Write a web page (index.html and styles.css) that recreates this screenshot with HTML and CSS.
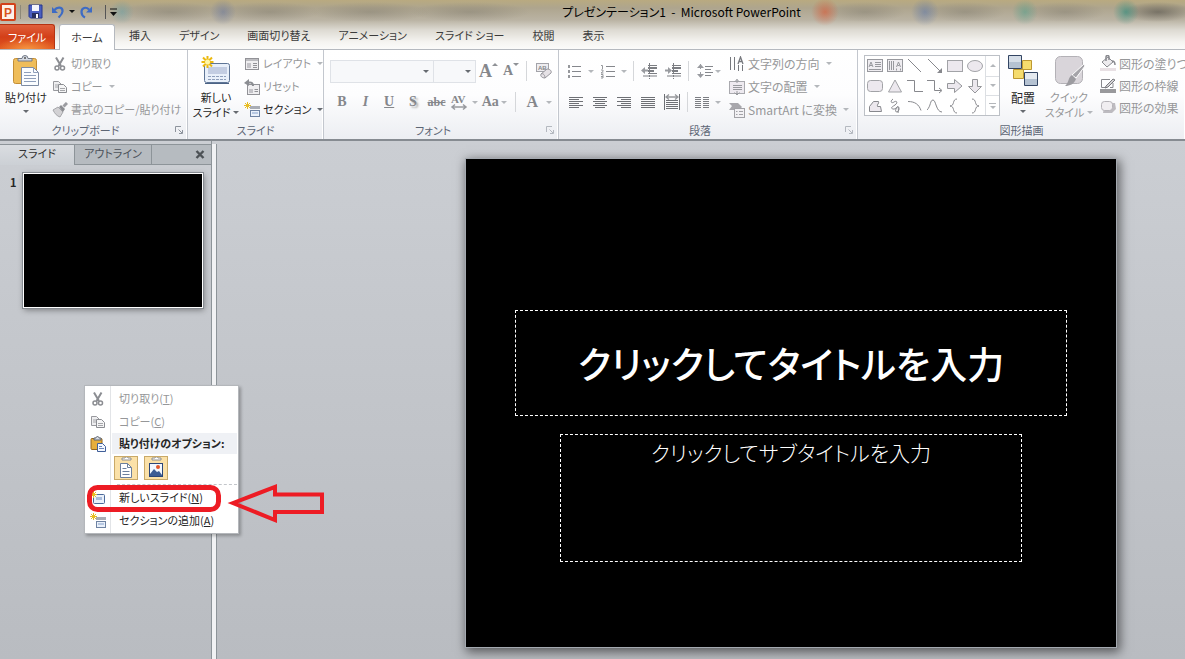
FILE: index.html
```html
<!DOCTYPE html>
<html lang="ja">
<head>
<meta charset="utf-8">
<title>プレゼンテーション1 - Microsoft PowerPoint</title>
<link rel="stylesheet" href="styles.css">
</head>
<body>
<header class="chrome">
  <div class="titlebar">
    <div class="quick">
      <svg class="app" width="16" height="18" viewBox="0 0 16 18"><rect x="1" y="1" width="14" height="16" rx="1" fill="#fdf1e8" stroke="#d2421a" stroke-width="2"/><text x="4" y="14" class="logo-text">P</text></svg>
      <span class="qsep"></span>
      <button class="qbtn" aria-label="上書き保存"><svg width="15" height="15" viewBox="0 0 15 15"><path d="M1 1h13v13H2.500L1 12.500z" fill="#4a5fc0" stroke="#27368d"/><path d="M4 1h7v6H4z" fill="#f4f6fd"/><path d="M4 9h7v5H4z" fill="#26305f"/><path d="M8 10h2v4H8z" fill="#fff"/></svg></button>
      <button class="qbtn" aria-label="元に戻す"><svg width="14" height="14" viewBox="0 0 14 14"><path d="M3.500 5C6 1.500 12 1.500 11.500 6.500 11.200 9.500 9 11 7.500 12.500" fill="none" stroke="#3d6bc4" stroke-width="2.200"/><path d="M1 2v6h6z" fill="#3d6bc4"/></svg></button>
      <span class="caret dark"></span>
      <button class="qbtn" aria-label="やり直し"><svg width="14" height="14" viewBox="0 0 14 14"><path d="M10 4.500C7 1.500 2.500 2.500 2.500 7c0 2.500 1.500 4.500 3.500 5.500" fill="none" stroke="#3d6bc4" stroke-width="2.200"/><path d="M13 1.500v6H7z" fill="#3d6bc4"/></svg></button>
      <span class="qsep dark"></span>
      <button class="qbtn" aria-label="カスタマイズ"><svg width="7" height="8" viewBox="0 0 7 8"><path d="M0 4h7L3.500 8z" fill="#111"/><path d="M0 1h7" stroke="#111"/></svg></button>
    </div>
    <h1 class="doc-title">プレゼンテーション1&nbsp; -&nbsp; Microsoft PowerPoint</h1>
  </div>
  <nav class="tabs">
    <button class="tab file">ファイル</button>
    <button class="tab active">ホーム</button>
    <button class="tab">挿入</button>
    <button class="tab">デザイン</button>
    <button class="tab">画面切り替え</button>
    <button class="tab">アニメーション</button>
    <button class="tab">スライド ショー</button>
    <button class="tab">校閲</button>
    <button class="tab">表示</button>
  </nav>
</header>

<section class="ribbon">
  <section class="group clipboard">
    <div class="group-body">
      <button class="big paste">
        <svg width="28" height="32" viewBox="0 0 28 32"><rect x="1.500" y="3.500" width="23" height="25" rx="2" fill="#efbd5a" stroke="#c48e35"/><path d="M6 6V3.500h4a3 3 0 0 1 6 0h4V6z" fill="#d5dae2" stroke="#727987"/><circle cx="13" cy="3" r="1" fill="#555"/><path d="M9.500 12.500h12l5 5v13h-17z" fill="#fbfdff" stroke="#7d8ba3"/><path d="M21.500 12.500v5h5M12 17.500h7M12 20.500h12M12 23.500h12M12 26.500h12" fill="none" stroke="#8f9fbb"/></svg>
        <span>貼り付け</span><span class="caret"></span>
      </button>
      <div class="stack kana">
        <button class="small off"><svg width="16" height="16" viewBox="0 0 16 16"><path d="M4 1.500l5 8.500M11.500 1.500L6.500 10" fill="none" stroke="#8b8d92" stroke-width="2"/><circle cx="5" cy="12" r="2" fill="none" stroke="#8b8d92" stroke-width="1.500"/><circle cx="10.500" cy="12" r="2" fill="none" stroke="#8b8d92" stroke-width="1.500"/></svg>切り取り</button>
        <button class="small off"><svg width="16" height="16" viewBox="0 0 16 16"><path d="M1.500 2.500h5l3 3v6h-8z" fill="#eeeef0" stroke="#98999e"/><path d="M6.500 5.500h5l3 3v5h-8z" fill="#f5f5f6" stroke="#8b8d92"/><path d="M3 6h3M3 8h3M8 9.500h5M8 11.500h5" stroke="#a5a6aa"/></svg>コピー<span class="caret"></span></button>
        <button class="small off"><svg width="16" height="16" viewBox="0 0 16 16"><path d="M1 8l5-3 5 5-3 5c-3-1-5-3-7-7z" fill="#d2d1d4" stroke="#a5a6aa"/><path d="M7 5l2-2 4 4-2 3z" fill="#8b8d92"/><path d="M11.500 4.500L15 1" stroke="#9b9ca1" stroke-width="3"/></svg>書式のコピー/貼り付け</button>
      </div>
    </div>
    <div class="group-name"><span>クリップボード</span><button class="launch" aria-label="クリップボードの詳細"><svg width="8" height="8" viewBox="0 0 8 8"><path d="M.500 6V.500H6M3.500 3.500L7 7M7.500 4v3.500H4" fill="none" stroke="#8d939c"/></svg></button></div>
  </section>

  <section class="group slides">
    <div class="group-body">
      <button class="big two">
        <svg width="32" height="32" viewBox="0 0 32 32"><rect x="4.500" y="8.500" width="25" height="19" rx="2" fill="#e9f0fa" stroke="#5e7596"/><path d="M8 12h19v7H8z" fill="#c3cde2"/><path d="M8 21.500h18M8 24.500h18" stroke="#8f9fbb" stroke-dasharray="3 1"/><path d="M5 28.500h24" stroke="#4b6284"/><path d="M7.500 1v12M1.500 7h12M3 2.500l9 9M12 2.500l-9 9" stroke="#ecb90f" stroke-width="2"/><circle cx="7.500" cy="7" r="2.500" fill="#fff7a8"/></svg>
        <span>新しい</span><span class="line">スライド<span class="caret"></span></span>
      </button>
      <div class="stack kana">
        <button class="small off"><svg width="16" height="16" viewBox="0 0 16 16"><rect x="1.500" y="2.500" width="13" height="11" fill="#f0eff1" stroke="#929297"/><path d="M2 3h12v2H2z" fill="#bcbcc0"/><path d="M3 7h4v5H3z" fill="#c4c3c8"/><path d="M9 7.500h4M9 9.500h4M9 11.500h4" stroke="#929297"/></svg>レイアウト<span class="caret"></span></button>
        <button class="small off"><svg width="16" height="16" viewBox="0 0 16 16"><rect x="3.500" y="5.500" width="12" height="10" fill="#f0eff1" stroke="#929297"/><path d="M5 10h4v4H5z" fill="#c4c3c8"/><path d="M10.500 10.500H14M10.500 12.500H14" stroke="#929297"/><path d="M3 4c3-1 6-1 6 3" fill="none" stroke="#8b8d92" stroke-width="2"/><path d="M5 0v7L0 4z" fill="#8b8d92"/></svg>リセット</button>
        <button class="small"><svg width="16" height="16" viewBox="0 0 16 16"><path d="M6 4h10v3H6z" fill="#a9adb5"/><rect x="6.500" y="8.500" width="9" height="6" fill="#eaf1fb" stroke="#6e83a3"/><path d="M8 10h6v2H8z" fill="#b7c8e2"/><path d="M3.500 0v7M0 3.500h7M1 1l5 5M6 1L1 6" stroke="#e8bd22"/></svg>セクション<span class="caret"></span></button>
      </div>
    </div>
    <div class="group-name"><span>スライド</span></div>
  </section>

  <section class="group font">
    <div class="group-body rows">
      <div class="row">
        <label class="combo wide"><select aria-label="フォント"><option></option></select><span class="caret mid"></span></label>
        <label class="combo"><select aria-label="フォント サイズ"><option></option></select><span class="caret mid"></span></label>
        <button class="tool serif grow">A<span class="mark up"></span></button>
        <button class="tool serif shrink">A<span class="mark down"></span></button>
        <span class="div"></span>
        <button class="tool" aria-label="書式のクリア"><svg width="18" height="18" viewBox="0 0 18 18"><rect x="1.500" y="1.500" width="12" height="8" fill="#eeedf0" stroke="#a3a3a9"/><text x="3" y="8" class="tiny">AB</text><path d="M6 12l6-5c3 0 5 2 4 4l-6 5c-3 0-5-2-4-4z" fill="#e6e2e6" stroke="#98979d"/><path d="M6 12c1-1 4 0 4 4" fill="none" stroke="#98979d"/></svg></button>
      </div>
      <div class="row">
        <button class="tool serif"><b>B</b></button>
        <button class="tool serif"><i>I</i></button>
        <button class="tool serif"><u>U</u></button>
        <button class="tool serif shade">S</button>
        <button class="tool serif strike"><s>abc</s></button>
        <button class="tool serif av" aria-label="文字の間隔"><svg width="20" height="18" viewBox="0 0 20 18"><text x="1" y="10" class="av-text">AV</text><path d="M2 14h14M5 11.500L2 14l3 2.500M13 11.500l3 2.500-3 2.500" fill="none" stroke="#989a9f" stroke-width="1.500"/></svg><span class="caret pale"></span></button>
        <button class="tool serif case">Aa<span class="caret pale"></span></button>
        <span class="div"></span>
        <button class="tool serif color">A<span class="caret pale"></span></button>
      </div>
    </div>
    <div class="group-name"><span>フォント</span><button class="launch pale" aria-label="フォントの詳細"><svg width="8" height="8" viewBox="0 0 8 8"><path d="M.500 6V.500H6M3.500 3.500L7 7M7.500 4v3.500H4" fill="none" stroke="#8d939c"/></svg></button></div>
  </section>

  <section class="group para">
    <div class="group-body">
      <div class="rows">
        <div class="row">
          <button class="tool drop" aria-label="箇条書き"><svg width="15" height="15" viewBox="0 0 15 15"><path d="M5 2.500h9M5 7.500h9M5 12.500h9" stroke="#85878c"/><path d="M1 1h2v3H1zM1 6h2v3H1zM1 11h2v3H1z" fill="#96989c"/></svg><span class="caret pale"></span></button>
          <button class="tool drop" aria-label="段落番号"><svg width="15" height="15" viewBox="0 0 15 15"><path d="M6 2.500h9M6 7.500h9M6 12.500h9" stroke="#85878c"/><path d="M1 1.500h1.500V5M1 6h2v1.500L1 9h2.500M1 10.500h2v3.500H1M1 12.500h2" fill="none" stroke="#96989c"/></svg><span class="caret pale"></span></button>
          <span class="div"></span>
          <button class="tool" aria-label="インデントを減らす"><svg width="16" height="16" viewBox="0 0 16 16"><path d="M7 2.500h9M7 10.500h9M2 13h14" stroke="#7c7e83"/><path d="M7 5h9M7 8h6" stroke="#7c7e83" stroke-width="2"/><path d="M8.500 0v16" stroke="#7c7e83" stroke-dasharray="2 1"/><path d="M0 7.500L4 4v2.500h3v2H4V11z" fill="#999ba0"/></svg></button>
          <button class="tool" aria-label="インデントを増やす"><svg width="16" height="16" viewBox="0 0 16 16"><path d="M7 2.500h9M7 10.500h9M2 13h14" stroke="#7c7e83"/><path d="M7 5h9M7 8h6" stroke="#7c7e83" stroke-width="2"/><path d="M8.500 0v16" stroke="#7c7e83" stroke-dasharray="2 1"/><path d="M7 7.500L3 4v2.500H0v2h3V11z" fill="#999ba0"/></svg></button>
          <span class="div"></span>
          <button class="tool drop tight" aria-label="行間"><svg width="16" height="16" viewBox="0 0 16 16"><path d="M3.500 1v14" stroke="#999ba0" stroke-dasharray="5 3"/><path d="M0 5l3.500-4L7 5zM0 11l3.500 4L7 11z" fill="#999ba0"/><path d="M8 3.500h8M8 6.500h6M8 9.500h8M8 12.500h6" stroke="#85878c"/></svg><span class="caret pale"></span></button>
        </div>
        <div class="row">
          <button class="tool" aria-label="左揃え"><svg width="14" height="13" viewBox="0 0 14 13"><path d="M0 1.500h14M0 3.500h10M0 5.500h14M0 7.500h10M0 9.500h14M0 11.500h10" stroke="#6e7075"/></svg></button>
          <button class="tool" aria-label="中央揃え"><svg width="14" height="13" viewBox="0 0 14 13"><path d="M0 1.500h14M2 3.500h10M0 5.500h14M2 7.500h10M0 9.500h14M2 11.500h10" stroke="#6e7075"/></svg></button>
          <button class="tool" aria-label="右揃え"><svg width="14" height="13" viewBox="0 0 14 13"><path d="M0 1.500h14M4 3.500h10M0 5.500h14M4 7.500h10M0 9.500h14M4 11.500h10" stroke="#6e7075"/></svg></button>
          <button class="tool" aria-label="両端揃え"><svg width="14" height="13" viewBox="0 0 14 13"><path d="M0 1.500h14M0 3.500h14M0 5.500h14M0 7.500h14M0 9.500h14M0 11.500h14" stroke="#6e7075"/></svg></button>
          <button class="tool" aria-label="均等割り付け"><svg width="16" height="16" viewBox="0 0 16 16"><path d="M.500 0v16M15.500 0v16M2 6.500h12M2 8.500h12M2 10.500h12M2 12.500h12M2 14.500h12" stroke="#6e7075"/><path d="M2 3h12M5 .500L2 3l3 2.500M11 .500L14 3l-3 2.500" fill="none" stroke="#96989c" stroke-width="1.300"/></svg></button>
          <span class="div"></span>
          <button class="tool drop" aria-label="段組み"><svg width="14" height="13" viewBox="0 0 14 13"><path d="M0 1.500h6M8 1.500h6M0 3.500h6M8 3.500h6M0 5.500h6M8 5.500h6M0 7.500h6M8 7.500h6M0 9.500h6M8 9.500h6M0 11.500h6M8 11.500h6" stroke="#7c7e83"/></svg><span class="caret pale"></span></button>
        </div>
      </div>
      <div class="stack">
        <button class="small off"><svg width="16" height="16" viewBox="0 0 16 16"><path d="M1.500 1v13M5.500 1v13M9.500 9v6M13.500 9v6" stroke="#77797e"/><path d="M9 8l2.500-7L14 8M10 5.500h3" fill="none" stroke="#77797e" stroke-width="1.300"/></svg>文字列の方向<span class="caret"></span></button>
        <button class="small off"><svg width="16" height="16" viewBox="0 0 16 16"><rect x=".500" y="2.500" width="15" height="12" fill="#eeeaf0" stroke="#a9a9ae"/><path d="M8 0v4M8 12v4M5.500 3L8 .500 10.500 3M5.500 13.500L8 16l2.500-2.500M4 6.500h9M4 8.500h9M4 10.500h9" fill="none" stroke="#98999e"/></svg>文字の配置<span class="caret"></span></button>
        <button class="small off"><svg width="16" height="16" viewBox="0 0 16 16"><path d="M0 1h9l4 4-3 3H0l3-4z" fill="#a8a7ac"/><rect x="5.500" y="6.500" width="10" height="9" fill="#f2f1f4" stroke="#a2a2a7"/><path d="M7 9.500h1.500M10 9.500h4M7 12.500h1.500M10 12.500h4" stroke="#a2a2a7"/></svg>SmartArt に変換<span class="caret"></span></button>
      </div>
    </div>
    <div class="group-name"><span>段落</span><button class="launch pale" aria-label="段落の詳細"><svg width="8" height="8" viewBox="0 0 8 8"><path d="M.500 6V.500H6M3.500 3.500L7 7M7.500 4v3.500H4" fill="none" stroke="#8d939c"/></svg></button></div>
  </section>

  <section class="group draw">
    <div class="group-body">
      <div class="gallery">
        <div class="shapes">
          <button aria-label="テキスト ボックス"><svg width="16" height="16" viewBox="0 0 16 16"><rect x=".500" y="1.500" width="15" height="12" fill="#efedf1" stroke="#98999e"/><path d="M2 9l2-5 2 5M3 7.500h2M8 4.500h6M8 6.500h6M8 8.500h6M2 11.500h12" fill="none" stroke="#98999e"/></svg></button>
          <button aria-label="縦書きテキスト ボックス"><svg width="16" height="16" viewBox="0 0 16 16"><rect x=".500" y="1.500" width="15" height="12" fill="#efedf1" stroke="#98999e"/><path d="M9.500 9l2-5 2 5M10.500 7.500h2M2.500 3v9M4.500 3v9M6.500 3v9M9.500 10.500v2M13.500 10.500v2" fill="none" stroke="#98999e"/></svg></button>
          <button aria-label="直線"><svg width="16" height="16" viewBox="0 0 16 16"><path d="M1 1l13 13" stroke="#87888d"/></svg></button>
          <button aria-label="矢印"><svg width="16" height="16" viewBox="0 0 16 16"><path d="M1 1l12 12" stroke="#87888d"/><path d="M15 10v5h-5z" fill="#87888d"/></svg></button>
          <button aria-label="四角形"><svg width="16" height="16" viewBox="0 0 16 16"><rect x=".500" y="2.500" width="15" height="11" fill="#ece8ee" stroke="#a2a3a7"/></svg></button>
          <button aria-label="楕円"><svg width="16" height="16" viewBox="0 0 16 16"><ellipse cx="8" cy="8" rx="7.500" ry="5.500" fill="#ece8ee" stroke="#a2a3a7"/></svg></button>
          <button aria-label="角丸四角形"><svg width="16" height="16" viewBox="0 0 16 16"><rect x=".500" y="2.500" width="15" height="11" rx="3" fill="#ece8ee" stroke="#a2a3a7"/></svg></button>
          <button aria-label="三角形"><svg width="16" height="16" viewBox="0 0 16 16"><path d="M8 2l6.500 12h-13z" fill="#ece8ee" stroke="#a2a3a7"/></svg></button>
          <button aria-label="カギ線"><svg width="16" height="16" viewBox="0 0 16 16"><path d="M0 2.500h7.500v11H16" fill="none" stroke="#87888d"/></svg></button>
          <button aria-label="カギ線矢印"><svg width="16" height="16" viewBox="0 0 16 16"><path d="M0 2.500h7.500v10H14M12 10l3 2.500-3 2.500" fill="none" stroke="#87888d"/></svg></button>
          <button aria-label="右矢印"><svg width="16" height="16" viewBox="0 0 16 16"><path d="M.500 5.500h7V1.500L15 8l-7.500 6.500v-4h-7z" fill="#ece8ee" stroke="#96979b"/></svg></button>
          <button aria-label="下矢印"><svg width="16" height="16" viewBox="0 0 16 16"><path d="M5.500 1.500h5v7h4L8 15 1.500 8.500h4z" fill="#ece8ee" stroke="#96979b"/></svg></button>
          <button aria-label="フリーフォーム"><svg width="16" height="16" viewBox="0 0 16 16"><path d="M2.500 13.500V8.500l4-5h5c1 2-2 3-1 5h3l1 5z" fill="#ece8ee" stroke="#87888d"/></svg></button>
          <button aria-label="フリーハンド"><svg width="16" height="16" viewBox="0 0 16 16"><path d="M6 1c-3 2-2 5 1 3s4 1 1 3-5 3-2 4 5-5 6-1-5 6-3 1 3-1 2 4" fill="none" stroke="#87888d"/></svg></button>
          <button aria-label="円弧"><svg width="16" height="16" viewBox="0 0 16 16"><path d="M1 3.500c7 0 11 3 13 9" fill="none" stroke="#87888d"/></svg></button>
          <button aria-label="曲線"><svg width="16" height="16" viewBox="0 0 16 16"><path d="M0 12C4 8 3 2 6 2s3 12 9 12" fill="none" stroke="#87888d"/></svg></button>
          <button aria-label="左中かっこ"><svg width="16" height="16" viewBox="0 0 16 16"><path d="M10 1C5 1 8 8 3 8c5 0 2 7 7 7" fill="none" stroke="#87888d"/></svg></button>
          <button aria-label="右中かっこ"><svg width="16" height="16" viewBox="0 0 16 16"><path d="M5 1c5 0 2 7 7 7-5 0-2 7-7 7" fill="none" stroke="#87888d"/></svg></button>
        </div>
        <div class="scroller">
          <button aria-label="上へ"><span class="mark up"></span></button>
          <button aria-label="下へ"><span class="caret pale"></span></button>
          <button aria-label="その他"><span class="bar"></span><span class="caret pale"></span></button>
        </div>
      </div>
      <button class="big arrange">
        <svg width="32" height="32" viewBox="0 0 32 32"><path d="M15.500 5.500h9v9h-9zM6.500 14.500h10v9h-10z" fill="#f5dc6e" stroke="#bd9831"/><path d="M1.500.500h13v13h-13z" fill="#d6dee8" stroke="#334563"/><path d="M2 7h12v6H2z" fill="#b5c2d2"/><path d="M17.500 17.500h13v13h-13z" fill="#e4e9ef" stroke="#334563"/><path d="M18 24h12v6H18z" fill="#b5c2d2"/></svg>
        <span>配置</span><span class="caret"></span>
      </button>
      <button class="big two off quickstyle">
        <svg width="32" height="32" viewBox="0 0 32 32"><rect x="2.500" y="1.500" width="27" height="27" rx="5" fill="#d9d5da" stroke="#b3b1b6"/><path d="M31 9l1 2-9 12-4-3z" fill="#a5a4a9" stroke="#fff"/><path d="M19 20l4 4c-2 5-6 7-11 7 4-3 3-9 7-11z" fill="#9c9ba0"/></svg>
        <span>クイック</span><span class="line">スタイル<span class="caret"></span></span>
      </button>
      <div class="stack drawing">
        <button class="small off"><svg width="16" height="16" viewBox="0 0 16 16"><path d="M2 7l6-5 5 5-6 5z" fill="#edebee" stroke="#88898e"/><path d="M6 6V2c0-2 3-2 3 0v3M12 6c3 0 3 2 3 4" fill="none" stroke="#88898e" stroke-width="1.500"/><path d="M0 13h16v3H0z" fill="#e8e0e4"/></svg>図形の塗りつぶし<span class="caret"></span></button>
        <button class="small off"><svg width="16" height="16" viewBox="0 0 16 16"><path d="M10 2.500H1.500v8H5M13 6v4.500H10" fill="none" stroke="#88898e"/><path d="M6 9l7-7 2 1-7 7-3 1z" fill="#d5d3d6" stroke="#77787d"/><path d="M0 12h16v4H0z" fill="#99999c"/></svg>図形の枠線<span class="caret"></span></button>
        <button class="small off"><svg width="16" height="16" viewBox="0 0 16 16"><path d="M5 4h10l1 6-4 4H3z" fill="#bdbbc0"/><rect x="1.500" y="2.500" width="11" height="9" rx="3" fill="#f0eef1" stroke="#b5b3b8"/></svg>図形の効果<span class="caret"></span></button>
      </div>
    </div>
    <div class="group-name"><span>図形描画</span></div>
  </section>
</section>

<main class="workspace">
  <aside class="pane">
    <div class="pane-tabs">
      <button class="pane-tab on">スライド</button>
      <button class="pane-tab">アウトライン</button>
      <button class="close" aria-label="閉じる"><svg width="10" height="9" viewBox="0 0 10 9"><path d="M1.500 1l7 7M8.500 1l-7 7" stroke="#4d5256" stroke-width="2.400"/></svg></button>
    </div>
    <div class="thumb-row">
      <b class="num">1</b>
      <div class="thumb"></div>
    </div>
  </aside>
  <div class="splitter"></div>
  <section class="stage">
    <div class="slide">
      <div class="holder title">クリックしてタイトルを入力</div>
      <div class="holder subtitle">クリックしてサブタイトルを入力</div>
    </div>
  </section>
</main>

<div class="menu" role="menu">
  <button class="item off"><svg width="16" height="16" viewBox="0 0 16 16"><path d="M4 1.500l5 8.500M11.500 1.500L6.500 10" fill="none" stroke="#8b8d92" stroke-width="2"/><circle cx="5" cy="12" r="2" fill="none" stroke="#8b8d92" stroke-width="1.500"/><circle cx="10.500" cy="12" r="2" fill="none" stroke="#8b8d92" stroke-width="1.500"/></svg><span>切り取り(<u>T</u>)</span></button>
  <button class="item off"><svg width="16" height="16" viewBox="0 0 16 16"><path d="M1.500 2.500h5l3 3v6h-8z" fill="#eeeef0" stroke="#98999e"/><path d="M6.500 5.500h5l3 3v5h-8z" fill="#f5f5f6" stroke="#8b8d92"/><path d="M3 6h3M3 8h3M8 9.500h5M8 11.500h5" stroke="#a5a6aa"/></svg><span>コピー(<u>C</u>)</span></button>
  <div class="item head"><svg width="16" height="16" viewBox="0 0 16 16"><rect x="1" y="2.500" width="11" height="11" rx="1" fill="#e5ae3c" stroke="#94671e"/><path d="M4 4V2h2c0-2 3-2 3 0h2v2z" fill="#d5dae2" stroke="#5d636f"/><path d="M7.500 7.500h5l3 3v5h-8z" fill="#f4f8ff" stroke="#405f99"/><path d="M9 10.500h3M9 12.500h5" stroke="#6c87b8"/></svg><span>貼り付けのオプション:</span></div>
  <div class="paste-opts">
    <button aria-label="貼り付け先のテーマを使用"><svg width="22" height="22" viewBox="0 0 22 22"><path d="M7 3V1h3c0-1.500 3-1.500 3 0h3v2z" fill="#fff" stroke="#8e8e8e"/><path d="M5.500 6.500h7l4 4v10h-11z" fill="#fff" stroke="#6c7f9d"/><path d="M12.500 6.500v4h4M7.500 11.500h4M7.500 14.500h7M7.500 17.500h7" fill="none" stroke="#6c7f9d"/></svg></button>
    <button aria-label="図"><svg width="22" height="22" viewBox="0 0 22 22"><path d="M7 3V1h3c0-1.500 3-1.500 3 0h3v2z" fill="#fff" stroke="#8e8e8e"/><rect x="4.500" y="6.500" width="13" height="13" fill="#f3f8ff" stroke="#2c4677"/><path d="M5 17l4-5 3 3 2-1 3 4v1H5z" fill="#3c5c94"/><circle cx="13" cy="10" r="2" fill="#e2582c"/></svg></button>
  </div>
  <div class="rule"></div>
  <button class="item"><svg width="16" height="16" viewBox="0 0 16 16"><rect x="3.500" y="4.500" width="11" height="9" rx="1" fill="#e9f0fa" stroke="#4b6999"/><path d="M6 7h6v3H6z" fill="#a9bcdb"/><path d="M3.500 1v7M0 4.500h7M1 2l5 5M6 2L1 7" stroke="#e8bd22"/></svg><span>新しいスライド(<u>N</u>)</span></button>
  <button class="item"><svg width="16" height="16" viewBox="0 0 16 16"><path d="M6 4h10v3H6z" fill="#a9adb5"/><rect x="6.500" y="8.500" width="9" height="6" fill="#eaf1fb" stroke="#6e83a3"/><path d="M8 10h6v2H8z" fill="#b7c8e2"/><path d="M3.500 0v7M0 3.500h7M1 1l5 5M6 1L1 6" stroke="#e8bd22"/></svg><span>セクションの追加(<u>A</u>)</span></button>
</div>
<svg class="callout" width="240" height="44" viewBox="0 0 240 44"><rect x="4.500" y="4.500" width="129" height="22" rx="8" fill="none" stroke="#ed1c24" stroke-width="5"/><path d="M148 20L190 4v7.500h47V29H190v8z" fill="none" stroke="#ed1c24" stroke-width="4"/></svg>
</body>
</html>
```
FILE: styles.css
```css
* { box-sizing: border-box; }

body {
  margin: 0;
  min-height: 100vh;
  display: flex;
  flex-direction: column;
  overflow: hidden;
  position: relative;
  font: 12px/15px "Noto Sans CJK JP", "Noto Sans", sans-serif;
  font-feature-settings: "palt";
  color: #262626;
  background: #bfc3c8;
}

button, select {
  margin: 0;
  padding: 0;
  border: 0;
  background: none;
  font: inherit;
  font-feature-settings: inherit;
  color: inherit;
  white-space: nowrap;
}

svg { display: block; flex: none; }

/* Window chrome */
.chrome {
  background:
    radial-gradient(circle at 122px 12px, #4f9aa866 0, transparent 12px),
    radial-gradient(circle at 223px 12px, #586a9a77 0, transparent 13px),
    radial-gradient(circle at 825px 12px, #d8542f99 0, transparent 14px),
    radial-gradient(circle at 925px 12px, #4a6aa877 0, transparent 14px),
    radial-gradient(circle at 1025px 12px, #3d9a8677 0, transparent 13px),
    radial-gradient(circle at 1126px 12px, #24897a99 0, transparent 13px),
    radial-gradient(ellipse 50px 10px at 170px 12px, #6d695f55, transparent),
    radial-gradient(ellipse 50px 10px at 270px 12px, #6d695f55, transparent),
    radial-gradient(ellipse 60px 10px at 370px 12px, #6d695f55, transparent),
    radial-gradient(ellipse 60px 10px at 470px 12px, #6d695f55, transparent),
    radial-gradient(ellipse 40px 10px at 865px 12px, #6d695f55, transparent),
    radial-gradient(ellipse 40px 10px at 965px 12px, #6d695f55, transparent),
    radial-gradient(ellipse 40px 10px at 1065px 12px, #6d695f55, transparent),
    radial-gradient(ellipse 36px 10px at 1158px 12px, #45423d88, transparent),
    linear-gradient(#b9aa80 0, #aea58e 8px, #bab3a3 20px, #dddad2 30px, #f5f4f1 42px, #fbfbfa 49px);
  border-bottom: 1px solid #b5b9bf;
}

.titlebar {
  display: grid;
  grid-template-columns: 1fr auto 1fr;
  align-items: center;
  height: 23px;
}

.quick { display: flex; align-items: center; height: 23px; }
.qbtn { padding: 0 4px; }
.qsep { width: 1px; height: 14px; margin: 0 3px 0 4px; background: #8d8979; }
.qsep.dark { background: #555; margin: 0 0 0 8px; }
.logo-text { font: 700 12px "Liberation Sans", sans-serif; fill: #d9541e; }
.doc-title { grid-column: 2; margin: 0; font-size: 12px; font-weight: 400; color: #000; padding-left: 178px; }

.caret {
  display: inline-block;
  flex: none;
  border: 3px solid transparent;
  border-top-color: #666a70;
  border-bottom: 0;
}
.caret.dark { border-top-color: #111; }
.caret.pale, .off .caret { border-top-color: #b4b7bb; }
.mark { border: 3px solid transparent; border-bottom: 0; border-top-color: #8f9196; }
.mark.up { border-bottom: 3px solid #8f9196; border-top: 0; }

.tabs { display: flex; height: 26px; align-items: stretch; font-size: 11px; }
.tab { padding: 0 14px 1px; color: #3b3b3b; }
.tab.file {
  width: 55px;
  padding: 0;
  margin: 1px 4px 0 0;
  color: #fff;
  border: 1px solid #b43312;
  border-left: 0;
  border-bottom: 0;
  border-radius: 0 3px 0 0;
  background: radial-gradient(ellipse 30px 12px at 50% 100%, #f59440, transparent), linear-gradient(#e0603b, #d33f18 50%, #e2581f);
}
.tab.active {
  width: 56px;
  padding: 0;
  margin: 1px 0 -1px;
  border: 1px solid #b5b9bf;
  border-bottom: 0;
  border-radius: 3px 3px 0 0;
  background: #fff;
}

/* Ribbon */
.ribbon {
  display: flex;
  height: 91px;
  overflow: hidden;
  border-bottom: 2px solid #868b91;
  background: linear-gradient(#fff 0, #fdfdfe 50%, #eceef2 100%);
}
.group {
  display: flex;
  flex-direction: column;
  flex: none;
  padding-top: 2px;
  border-right: 1px solid #c3c7ce;
  box-shadow: inset -1px 0 #fff;
}
.clipboard { width: 188px; }
.slides { width: 136px; }
.font { width: 235px; }
.para { width: 299px; }
.draw { flex: 1 0 0; min-width: 0; border-right: 0; }
.group-body { display: flex; height: 71px; }
.group-name {
  display: flex;
  align-items: center;
  height: 14px;
  color: #5d6675;
  text-align: center;
  font-size: 11px;
}
.group-name span { flex: 1; }
.launch { padding: 0 4px; }
.launch.pale { opacity: .6; }
.off { color: #969799; }

.big {
  display: flex;
  flex-direction: column;
  align-items: center;
  flex: none;
  width: 52px;
  padding-top: 3px;
  font-size: 11px;
  line-height: 15px;
}
.big svg { margin-bottom: 3px; }
.big .line { display: flex; align-items: center; gap: 3px; }
.big > .caret { margin-top: 5px; }
.big.two { width: 56px; }

.stack { display: flex; flex-direction: column; }
.kana { font-size: 11px; }
.small { display: flex; align-items: center; gap: 3px; height: 23px; }
.small .caret { margin-left: 3px; }
.drawing { padding-left: 8px; }
.drawing .small { height: 22px; }

.rows { display: flex; flex-direction: column; }
.row { display: flex; align-items: center; box-sizing: content-box; height: 24px; padding-top: 7px; }
.group-body.rows { padding-left: 6px; }
.tool {
  display: flex;
  align-items: center;
  justify-content: center;
  width: 24px;
  height: 24px;
  color: #85878b;
}
.tool .caret { margin-left: 4px; }
.tool.serif { font: 700 14px/16px "Liberation Serif", serif; }
.tool.grow { font-size: 18px; width: 25px; }
.tool.shrink { font-size: 14px; width: 20px; }
.tool .mark { align-self: flex-start; margin-top: 4px; }
.tool.strike { font-size: 12px; }
.tool.shade { text-shadow: 2px 2px 2px #aaa; }
.tool.av, .tool.case { width: 31px; }
.tool.av .caret, .tool.case .caret { margin-left: 2px; }
.tool.color { font-size: 16px; width: 38px; }
.tool.color .caret { margin-left: 8px; }
.tiny { font: 700 6px "Liberation Sans", sans-serif; fill: #85878b; }
.av-text { font: 700 11px "Liberation Serif", serif; fill: #85878b; }
.div { width: 1px; height: 20px; margin: 0 5px; background: #d5d7da; }
.combo { position: relative; width: 43px; height: 23px; }
.combo.wide { width: 104px; }
.combo select { appearance: none; display: block; width: 100%; height: 23px; border: 1px solid #dfe2e7; background: #f7f8fa; }
.combo .caret { position: absolute; right: 5px; top: 10px; }
.combo + .combo { margin-left: -1px; }
.para .rows { width: 170px; padding-left: 5px; }
.drop { width: 33px; }
.drop .caret { margin-left: 6px; }
.tight .caret { margin-left: 2px; }
.para .div { margin: 0 3px; }

.gallery {
  display: flex;
  flex: none;
  height: 61px;
  margin: 3px 0 0 6px;
  border: 1px solid #bcc0c6;
  background: #fff;
}
.shapes { display: grid; grid-template-columns: repeat(6, 20px); grid-auto-rows: 20px; }
.shapes button { display: grid; place-items: center; }
.scroller { display: grid; grid-template-rows: 1fr 1fr 1fr; width: 14px; border-left: 1px solid #dcdfe3; }
.scroller button { display: flex; flex-direction: column; align-items: center; justify-content: center; gap: 2px; }
.scroller button + button { border-top: 1px solid #dcdfe3; }
.scroller .mark.up { border-bottom-color: #b4b7bb; }
.bar { width: 7px; height: 1px; background: #b4b7bb; }
.big.arrange { width: 46px; font-size: 12px; }
.big.quickstyle { width: 46px; }

/* Work area */
.workspace { display: flex; flex: 1; background: linear-gradient(#cbced3, #b9bcc1); }
.pane { width: 212px; padding-top: 3px; border-right: 1px solid #8d9499; }
.pane-tabs { display: grid; grid-template-columns: 74px 77px 1fr; height: 21px; border-top: 1px solid #8d9499; font-size: 11px; }
.pane-tab { color: #4c525b; border-left: 1px solid #8d9499; border-bottom: 1px solid #8d9499; background: #b6bbc0; padding-bottom: 3px; }
.pane-tab.on { color: #333; border: 0; background: linear-gradient(#dadde1, #ccd0d5); }
.close { display: flex; align-items: center; justify-content: flex-end; padding-right: 6px; border-left: 1px solid #8d9499; border-bottom: 1px solid #8d9499; background: #b6bbc0; }
.thumb-row { display: flex; align-items: flex-start; padding: 8px 8px 0 10px; gap: 7px; }
.num { width: 6px; padding-top: 2px; font-size: 11px; }
.thumb { flex: 1; aspect-ratio: 4 / 3; border: 1px solid #fff; outline: 1px solid #868b91; background: #000; box-shadow: 1px 2px 6px #0006; }
.splitter { width: 5px; border-right: 1px solid #8d9499; background: #f1f2f4; margin-top: 3px; }
.stage { flex: 1; padding: 18px 69px 0 249px; }
.slide {
  display: flex;
  flex-direction: column;
  align-items: center;
  gap: 18px;
  aspect-ratio: 650 / 488;
  padding-top: 151px;
  background: #000;
  box-shadow: 0 0 0 1px #a4a9b0, 2px 3px 10px 2px #0008;
  color: #fff;
}
.holder { border: 1px dashed #fff; text-align: center; white-space: nowrap; }
.title { display: grid; place-items: center; width: 85%; height: 106px; font-size: 37px; line-height: 48px; font-weight: 500; }
.subtitle { width: 71%; height: 128px; padding-top: 4px; font-size: 21px; line-height: 26px; font-weight: 300; }

/* Context menu and callout */
.menu {
  position: absolute;
  left: 84px;
  top: 385px;
  width: 155px;
  padding: 1px;
  border: 1px solid #b4b7bb;
  background: linear-gradient(90deg, #fff 25px, #e2e4e7 25px, #e2e4e7 26px, #fff 26px);
  box-shadow: 2px 2px 3px #0004;
  font-size: 11px;
}
.item { display: flex; align-items: center; gap: 13px; width: 100%; height: 23px; padding-left: 4px; text-align: left; }
.item.head { height: 21px; font-weight: 700; background: linear-gradient(90deg, transparent 26px, #eff1f5 26px); }
.paste-opts { display: flex; gap: 6px; padding: 2px 0 4px 28px; }
.paste-opts button { width: 24px; height: 24px; border: 1px solid #c9a968; background: #fbe1a8; }
.rule { margin: 0 0 1px 31px; border-top: 1px dashed #c3c6ca; }
.callout { position: absolute; left: 85px; top: 483px; pointer-events: none; }
```
